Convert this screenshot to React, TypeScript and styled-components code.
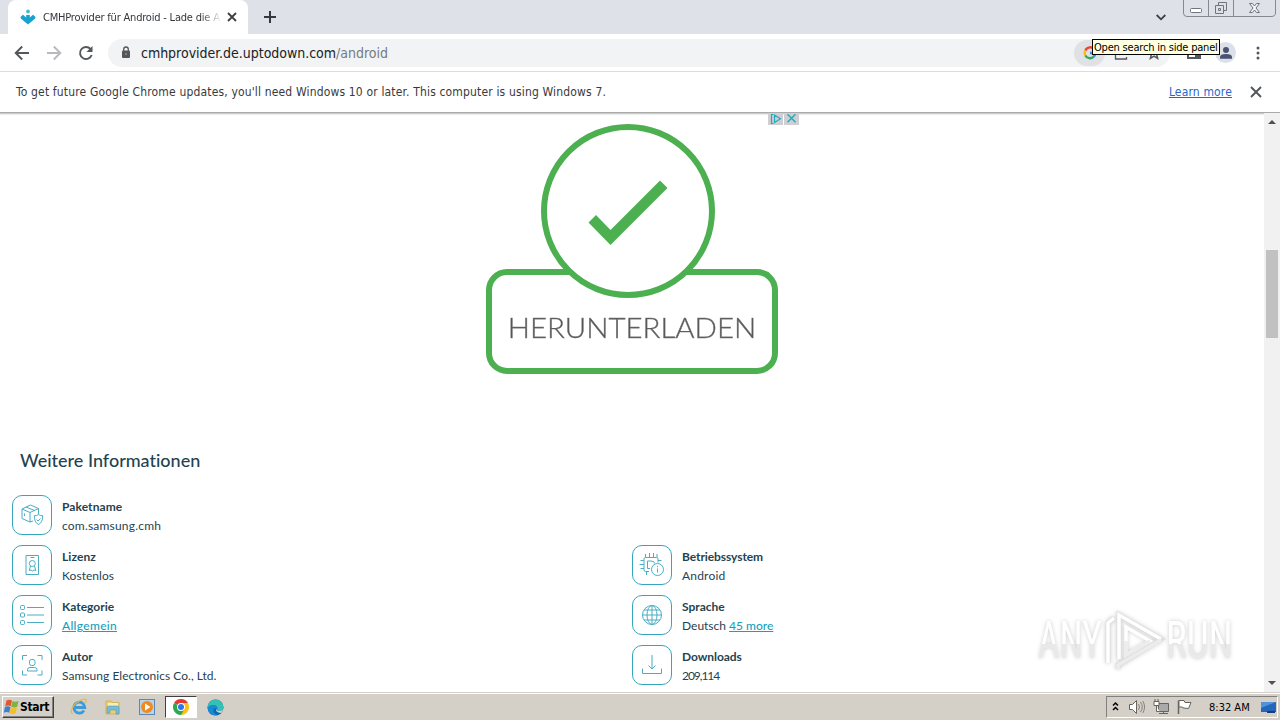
import React from "react"

import styled, { createGlobalStyle, css } from 'styled-components';

export default function App() {
  return (
    <Screen>
      <GlobalStyle />
      <TabStrip>
        <Tab>
          <UptodownLogo />
          <TabTitle>CMHProvider für Android - Lade die A</TabTitle>
          <Cross size={8} color="#3c4043" thickness={1.8} />
        </Tab>
        <NewTab><PlusIcon /></NewTab>
        <TabSearch><Chevron /></TabSearch>
        <WindowControls />
      </TabStrip>
      <Toolbar>
        <NavButtons>
          <ArrowLeft color="#54575b" />
          <ArrowLeft color="#b7b9bc" flipped />
          <ReloadIcon />
        </NavButtons>
        <AddressBar>
          <LockIcon />
          <Url>cmhprovider.de.uptodown.com<UrlPath>/android</UrlPath></Url>
          <SideSearch><GoogleIcon /></SideSearch>
          <ShareIcon />
          <StarIcon />
        </AddressBar>
        <SidePanelIcon />
        <Avatar><PersonIcon /></Avatar>
        <MenuDots />
        <Tooltip>Open search in side panel</Tooltip>
      </Toolbar>
      <InfoBar>
        <InfoText>To get future Google Chrome updates, you'll need Windows 10 or later. This computer is using Windows 7.</InfoText>
        <LearnMore>Learn more</LearnMore>
        <Cross size={10} color="#505357" thickness={1.8} />
      </InfoBar>
      <Viewport>
        <Page>
          <Ad>
            <AdBadges>
              <AdBadge>
                <svg width="15" height="12" viewBox="0 0 15 12" fill="none" stroke="#27a9bd" strokeWidth="1.2"><path d="M5.500 1.500h-2v9h2M6.500 2v7.500l6-3.750z" /></svg>
              </AdBadge>
              <AdBadge>
                <svg width="15" height="12" viewBox="0 0 15 12" fill="none" stroke="#27a9bd" strokeWidth="1.5"><path d="M3.500 1.200l8 8M11.500 1.200l-8 8" /></svg>
              </AdBadge>
            </AdBadges>
            <DownloadBox><DownloadLabel>HERUNTERLADEN</DownloadLabel></DownloadBox>
            <DownloadCircle>
              <svg width="82" height="67" viewBox="0 0 82 67"><path d="M3.500 43.500L25.500 66 82.500 9 75 1.500 25.500 51 11 36z" fill="#4caf50" /></svg>
            </DownloadCircle>
          </Ad>
          <Heading>Weitere Informationen</Heading>
          <Details>
            <Detail wide icon={<BoxIcon />} label="Paketname" spacing={0.08}><Value $spacing={0.2}>com.samsung.cmh</Value></Detail>
            <Detail icon={<LicenceIcon />} label="Lizenz" spacing={0.1}><Value $spacing={0.05}>Kostenlos</Value></Detail>
            <Detail icon={<ChipIcon />} label="Betriebssystem" spacing={-0.08}><Value $spacing={0.2}>Android</Value></Detail>
            <Detail icon={<ListIcon />} label="Kategorie" spacing={0}><ValueLink $spacing={0.3}>Allgemein</ValueLink></Detail>
            <Detail icon={<GlobeIcon />} label="Sprache" spacing={0}><Value>Deutsch <ValueLink>45 more</ValueLink></Value></Detail>
            <Detail icon={<AuthorIcon />} label="Autor" spacing={0}><Value $spacing={0.03}>Samsung Electronics Co., Ltd.</Value></Detail>
            <Detail icon={<DownloadIcon />} label="Downloads" spacing={-0.05}><Value $spacing={-1.05}>209,114</Value></Detail>
          </Details>
          <Watermark />
        </Page>
        <ScrollBar>
          <ScrollArrow />
          <ScrollThumb />
          <ScrollArrow $down />
        </ScrollBar>
      </Viewport>
      <Taskbar>
        <StartButton><WindowsLogo />Start</StartButton>
        <TaskItem><IeIcon /></TaskItem>
        <TaskItem><ExplorerIcon /></TaskItem>
        <TaskItem><PlayerIcon /></TaskItem>
        <TaskItem $active><ChromeIcon /></TaskItem>
        <TaskItem><EdgeIcon /></TaskItem>
        <Tray>
          <TrayIcons />
          <Clock>8:32 AM</Clock>
          <DesktopIcon />
        </Tray>
      </Taskbar>
    </Screen>
  );
};

type DetailProps = { icon: React.ReactNode, label: string, spacing: number, wide?: boolean, children: React.ReactNode };

function Detail({ icon, label, spacing, wide, children }: DetailProps) {
  return (
    <DetailRow $wide={wide}>
      <IconFrame>{icon}</IconFrame>
      <DetailText>
        <Label $spacing={spacing}>{label}</Label>
        <div>{children}</div>
      </DetailText>
    </DetailRow>
  );
}

function Cross({ size, color, thickness }: { size: number, color: string, thickness: number }) {
  return <svg width={size + 2} height={size + 2} viewBox={`-1 -1 ${size + 2} ${size + 2}`}><path d={`M0 0L${size} ${size}M${size} 0L0 ${size}`} stroke={color} strokeWidth={thickness} /></svg>;
}

function UptodownLogo() {
  return (
    <svg width="16" height="16" viewBox="0 0 16 16">
      <circle cx="8" cy="2.500" r="1.900" fill="#4cb8dc" />
      <path d="M.5 8L3 5.800 6.200 8.500V6h3.600v2.500L13 5.800 15.500 8q0 1.500-1.500 2.500L8 15.600 2 10.500Q.5 9.500.5 8z" fill="#16a3cf" />
    </svg>
  );
}

function PlusIcon() {
  return <svg width="12" height="12" viewBox="0 0 12 12"><path d="M6 0v12M0 6h12" stroke="#35383c" strokeWidth="2" /></svg>;
}

function Chevron() {
  return <svg width="10" height="7" viewBox="0 0 10 7"><path d="M.7 1l4.300 4.300L9.300 1" fill="none" stroke="#3c4043" strokeWidth="1.8" /></svg>;
}

function WindowControls() {
  return (
    <Controls width="94" height="17" viewBox="0 0 94 17" fill="none" stroke="#70747b">
      <path d="M.5 0v13q0 3.500 3.500 3.500h84q4.500 0 4.500-3.500V0M25.500 0v16M50.500 0v16" stroke="#858990" />
      <rect x="7.500" y="8.500" width="11" height="4" rx="1" fill="#fff" />
      <path d="M35.500 5.500v-3h8v8h-3M32.500 5.500h8v8h-8zM35.500 8.500h2v2h-2z" />
      <path d="M66.500 3.500h3l2 2.500 2-2.500h3L73 8l3.500 4.500h-3l-2-2.500-2 2.500h-3L70 8z" fill="#f4f5f7" />
    </Controls>
  );
}

function ArrowLeft({ color, flipped }: { color: string, flipped?: boolean }) {
  return <svg width="16" height="16" viewBox="0 0 16 16" transform={flipped ? 'scale(-1 1)' : undefined}><path d="M15 8H2M8.200 1.500L1.700 8l6.500 6.500" fill="none" stroke={color} strokeWidth="1.900" /></svg>;
}

function ReloadIcon() {
  return (
    <svg width="16" height="16" viewBox="0 0 16 16">
      <path d="M13.700 10A6 6 0 1 1 12.500 4" fill="none" stroke="#54575b" strokeWidth="1.900" />
      <path d="M14.500 1v6h-6z" fill="#54575b" />
    </svg>
  );
}

function LockIcon() {
  return (
    <svg width="10" height="13" viewBox="0 0 10 13">
      <rect x="1" y="4.500" width="8" height="7.500" rx="1" fill="#54575b" />
      <path d="M2.700 5V3.300a2.300 2.300 0 0 1 4.600 0V5" fill="none" stroke="#54575b" strokeWidth="1.300" />
      <circle cx="5" cy="8" r="1" fill="#8b8e91" />
    </svg>
  );
}

function GoogleIcon() {
  return (
    <svg width="14" height="14" viewBox="0 0 14 14" fill="none" strokeWidth="2.400">
      <path d="M11.300 3.300A5.200 5.200 0 0 0 2.400 4.500" stroke="#ea4335" />
      <path d="M2.400 4.500a5.200 5.200 0 0 0 0 5" stroke="#fbbc05" />
      <path d="M2.400 9.500a5.200 5.200 0 0 0 8.100 1.400" stroke="#34a853" />
      <path d="M10.500 10.900A5 5 0 0 0 12.200 7H7" stroke="#4285f4" />
    </svg>
  );
}

function ShareIcon() {
  return <svg width="14" height="14" viewBox="0 0 14 14"><path d="M1.500 6v7h11v-2M5 9q1-5 7-5" fill="none" stroke="#54575b" strokeWidth="1.300" /></svg>;
}

function StarIcon() {
  return <svg width="14" height="14" viewBox="0 0 14 14"><path d="M7 1.500l1.600 3.800 4.100.3-3.100 2.700 1 4L7 10.100l-3.600 2.200 1-4-3.100-2.700 4.100-.3z" fill="none" stroke="#54575b" strokeWidth="1.500" /></svg>;
}

function SidePanelIcon() {
  return <svg width="14" height="14" viewBox="0 0 14 14"><path d="M1 1h12v11H1z" fill="none" stroke="#54575b" strokeWidth="2" /><path d="M8 1h5v11H8z" fill="#54575b" /></svg>;
}

function PersonIcon() {
  return <svg width="14" height="14" viewBox="0 0 14 14" fill="#4b5271"><circle cx="7" cy="4" r="3" /><path d="M1 12.800V11q0-3 6-3t6 3v1.800z" /></svg>;
}

function MenuDots() {
  return <svg width="4" height="16" viewBox="0 0 4 16" fill="#54575b"><circle cx="2" cy="3" r="1.500" /><circle cx="2" cy="8" r="1.500" /><circle cx="2" cy="13" r="1.500" /></svg>;
}

function BoxIcon() {
  return (
    <LineIcon>
      <path d="M1 5L9.500 1l8 3.500V10M1 5v9.500L9 18l3-1M1 5l8 3.500V18M9 8.500l8.500-4M5 3l8.500 3.500M3.500 9.500v2.500" />
      <path d="M17.500 10.500q2 1.500 4.200 1.200 0 6.800-4.200 8.800-4.200-2-4.200-8.800 2.200.3 4.200-1.200zM15.500 15.500l1.500 1.500 2.500-2.500" />
    </LineIcon>
  );
}

function LicenceIcon() {
  return (
    <LineIcon>
      <path d="M5 1.500h12.500v19H5zM9.500 3.500h4" />
      <circle cx="11.300" cy="9.500" r="3" />
      <path d="M9.500 12l-1.300 4.500 1.800-.5 1.500 1 1.500-1 1.800.5L13.500 12" />
    </LineIcon>
  );
}

function ChipIcon() {
  return (
    <LineIcon>
      <path d="M8 17.500H4.500q-1.500 0-1.500-1.500V5q0-1.500 1.500-1.500h11Q17 3.500 17 5v3.500M4.500 3.500V0M8.500 3.500V-1M12.500 3.500V-1M16 3.500V0M3 6.500H-.5M3 10.500H-1.500M3 14.500H-.5M5.500 17.500V21M17 6.500h3.500M9 14.500H6.500V7H10q3.500 0 3.500 2.500" />
      <circle cx="16.500" cy="15.500" r="6" />
      <path d="M16.500 14.500v4M16.500 11.800v1.400" />
    </LineIcon>
  );
}

function ListIcon() {
  return (
    <LineIcon>
      <rect x="-.5" y="1.500" width="4" height="4" rx="1" />
      <rect x="-.5" y="9" width="4" height="4" rx="1" />
      <rect x="-.5" y="16.500" width="4" height="4" rx="1" />
      <path d="M6 3.500h17M6 11h17M6 18.500h17" />
    </LineIcon>
  );
}

function GlobeIcon() {
  return (
    <LineIcon>
      <circle cx="11" cy="11" r="9.500" />
      <ellipse cx="11" cy="11" rx="5" ry="9.500" />
      <path d="M11 1.500v19M1.500 11h19M3 6h16M3 16h16" />
    </LineIcon>
  );
}

function AuthorIcon() {
  return (
    <LineIcon>
      <path d="M1.500 6V1.500H6M16.500 1.500h4.500V6M1.500 16.500V21H6M16.500 21h4.500v-4.500" />
      <rect x="8.500" y="5.500" width="5.500" height="6" rx="2" />
      <path d="M6.500 17v-1.500q0-2 2.500-2h4.500q2.500 0 2.500 2V17z" />
    </LineIcon>
  );
}

function DownloadIcon() {
  return <LineIcon><path d="M11 1v14M7.500 11.500L11 15l3.500-3.500M1.500 14.500v5h19v-5" /></LineIcon>;
}

function LineIcon({ children }: { children: React.ReactNode }) {
  return <svg width="22" height="22" viewBox="0 0 22 22" overflow="visible" fill="none" stroke="#4badc3">{children}</svg>;
}

function Watermark() {
  return (
    <WatermarkRow>
      <WatermarkText $scale={0.72}>ANY</WatermarkText>
      <svg width="62" height="64" viewBox="0 0 62 64" fill="none" stroke="#fff" strokeWidth="3.500">
        <path d="M4 54V14l6-5M15 50V6l42 24L14 56v4" stroke="#dedede" strokeWidth="5" />
        <path d="M4 54V14l6-5M15 50V6l42 24M22 18v28l24-14z" />
        <path d="M22 32v14l24-14M57 31L14 56v4" stroke="#ececec" />
      </svg>
      <WatermarkText $scale={0.75}>RUN</WatermarkText>
    </WatermarkRow>
  );
}

function WindowsLogo() {
  return (
    <svg width="17" height="16" viewBox="0 0 16 16">
      <path d="M3 1.500q2.500-1.500 5.500 0L7.200 7.200q-2.500-1.500-5.500 0z" fill="#e4572e" />
      <path d="M9 2q2.500 1.500 6 0l-1.300 5.700q-3 1.500-6 0z" fill="#7cb342" />
      <path d="M1.500 8q2.500-1.500 5.500 0l-1.300 5.700q-2.500-1.500-5.500 0z" fill="#3f7fd0" />
      <path d="M7.500 8.500q2.500 1.500 6 0l-1.300 5.700q-3 1.500-6 0z" fill="#f5bd26" />
    </svg>
  );
}

function IeIcon() {
  return (
    <svg width="18" height="18" viewBox="0 0 18 18" fill="none">
      <path d="M14 12.500A5.500 5.500 0 1 1 14.800 9.500H4" stroke="#3c9bd8" strokeWidth="2.800" />
      <path d="M2.500 16C-1 13 4 5.500 10 2.500s7-1 5.500 2.500" stroke="#e8b93b" strokeWidth="1.300" />
    </svg>
  );
}

function ExplorerIcon() {
  return (
    <svg width="18" height="18" viewBox="0 0 18 18">
      <path d="M2 3h5l1 1.500h7V16H2z" fill="#edd06b" stroke="#c6a84b" strokeWidth=".7" />
      <path d="M4 5h10v4H4z" fill="#f7efb8" />
      <path d="M3 15V10q0-2 2-2h8q2 0 2 2v6h-3v-4H6v3z" fill="#77bddb" stroke="#5297b8" strokeWidth=".6" />
    </svg>
  );
}

function PlayerIcon() {
  return (
    <svg width="18" height="18" viewBox="0 0 18 18">
      <rect x="1.500" y="1.500" width="15" height="15" fill="#b7d4eb" stroke="#5a87b5" />
      <circle cx="9" cy="9" r="6" fill="#f18a1c" />
      <path d="M7 5.500v7L12.500 9z" fill="#fff" />
    </svg>
  );
}

function ChromeIcon() {
  return (
    <svg width="16" height="16" viewBox="0 0 16 16">
      <path d="M8 8L1.070 4A8 8 0 0 1 14.930 4z" fill="#e33b2e" />
      <path d="M8 8V4h6.930A8 8 0 0 1 8 16z" fill="#fbc116" />
      <path d="M8 8l3.500 2L8 16A8 8 0 0 1 1.070 4z" fill="#2da94f" />
      <circle cx="8" cy="8" r="4" fill="#fff" />
      <circle cx="8" cy="8" r="3" fill="#3174e8" />
    </svg>
  );
}

function EdgeIcon() {
  return (
    <svg width="17" height="17" viewBox="0 0 17 17">
      <circle cx="8.500" cy="8.500" r="8" fill="#0b67b8" />
      <path d="M.5 9A8 8 0 0 1 16.500 8q0 4-4 4-3.500 0-2-2.500Q9.500 5 5 6.500 1.500 7.500.5 9z" fill="#35bfb5" />
      <path d="M.5 9Q2 5.500 6.500 6q4 .5 4 3.500Q6 8.500 6.500 12 7 15 11 16 2 18 .5 9z" fill="#168bd2" />
      <path d="M10.300 9.500q-1.500 2.500 2 2.500 3 0 4-2-.5 2.500-2 4-5-.5-5.300-3z" fill="#d4d0c8" />
    </svg>
  );
}

function TrayIcons() {
  return (
    <svg width="84" height="18" viewBox="0 0 84 18" fill="none" stroke="#66645f">
      <path d="M2 7.500l2.500-2.500L7 7.500M2 12l2.500-2.500L7 12" stroke="#000" strokeWidth="1.500" />
      <path d="M18.500 6.500h3l4-4v13l-4-4h-3z" fill="#fff" />
      <path d="M27.500 6q2 3 0 6M29.500 4q3.500 5 0 10M31.800 3q3.500 6 0 12" stroke="#85837e" />
      <path d="M47.500 5.500h10v8h-10zM48 15.500h9M52.500 13v2" fill="#aaa" />
      <path d="M43 3.500h5v4h-5zM45.500 7.500v6h3M44 1v2M47 1v2" fill="#fff" />
      <path d="M67.500 16V2.500" strokeWidth="1.500" />
      <path d="M68 2.500h5l1 2h6l-2.500 6-5.500-.5-.5-1H68z" fill="#fff" />
    </svg>
  );
}

function DesktopIcon() {
  return <svg width="16" height="13" viewBox="0 0 16 13"><path d="M0 1h15v10H0z" fill="#2366bb" /><path d="M0 1h15L0 7z" fill="#4f94da" /><path d="M6 10h8v2H6z" fill="#173c77" /></svg>;
}

const GlobalStyle = createGlobalStyle`
  body {
    margin: 0;
    overflow: hidden;
  }
  * {
    box-sizing: border-box;
  }
  svg {
    display: block;
    flex: none;
  }
`

const uiFont = css`
  font-family: "DejaVu Sans Condensed", "DejaVu Sans", sans-serif;
  font-stretch: condensed;
`

const Screen = styled.div`
  ${uiFont}
  display: flex;
  flex-direction: column;
  width: 1280px;
  height: 720px;
  background: #fff;
  white-space: nowrap;
`

const TabStrip = styled.div`
  display: flex;
  align-items: flex-start;
  height: 34px;
  padding-left: 8px;
  background: #dee1e8;
`

const Tab = styled.div`
  display: flex;
  align-items: center;
  width: 240px;
  height: 34px;
  padding: 0 11px 0 12px;
  border-radius: 8px 8px 0 0;
  background: #fff;
`

const TabTitle = styled.div`
  flex: 1;
  margin: 1px 5px 0 7px;
  font-size: 11px;
  letter-spacing: -.2px;
  line-height: 16px;
  color: #34373b;
  mask-image: linear-gradient(90deg, #000 88%, transparent);
`

const NewTab = styled.div`
  margin: 11px 0 0 16px;
`

const TabSearch = styled.div`
  margin: 14px 0 0 auto;
`

const Controls = styled.svg`
  margin: 0 3px 0 17px;
`

const Toolbar = styled.div`
  position: relative;
  display: flex;
  align-items: center;
  height: 38px;
  padding: 0 20px 0 14px;
  border-bottom: 1px solid #dcdcdd;
`

const NavButtons = styled.div`
  display: flex;
  gap: 16px;
  width: 94px;
`

const AddressBar = styled.div`
  display: flex;
  align-items: center;
  width: 1062px;
  height: 28px;
  margin-right: 17px;
  padding: 0 9px 0 13px;
  border-radius: 14px;
  background: #f1f3f4;
`

const Url = styled.div`
  flex: 1;
  margin-left: 10px;
  font-size: 14px;
  letter-spacing: -.02px;
  color: #202124;
`

const UrlPath = styled.span`
  color: #777b80;
`

const SideSearch = styled.div`
  display: flex;
  align-items: center;
  width: 31px;
  height: 26px;
  margin-right: 9px;
  padding-left: 9px;
  border-radius: 13px;
  background: #dfe1e4;

  & + svg {
    margin-right: 19px;
  }
`

const Avatar = styled.div`
  display: flex;
  align-items: center;
  justify-content: center;
  width: 21px;
  height: 21px;
  margin: 0 20px 0 14px;
  border-radius: 50%;
  background: #dce0e8;
`

const Tooltip = styled.div`
  position: absolute;
  top: 5px;
  left: 1092px;
  width: 128px;
  height: 16px;
  padding-left: 1px;
  border: 1px solid #000;
  background: #ffffe1;
  font-size: 11px;
  letter-spacing: -.2px;
  line-height: 15px;
  color: #000;
`

const InfoBar = styled.div`
  display: flex;
  align-items: center;
  height: 40px;
  padding: 0 18px 0 16px;
  font-size: 12px;
  letter-spacing: .16px;
  color: #38393c;
`

const InfoText = styled.span`
  flex: 1;
`

const LearnMore = styled.span`
  margin-right: 18px;
  color: #2a66c8;
  text-decoration: underline;
`

const Viewport = styled.div`
  display: flex;
  height: 580px;
  border-top: 1px solid #aaa;
  box-shadow: inset 0 1px #ccc, inset 0 2px #ececec;
`

const Page = styled.div`
  position: relative;
  width: 1264px;
  overflow: hidden;
`

const Ad = styled.div`
  position: relative;
  height: 335px;
`

const AdBadges = styled.div`
  position: absolute;
  top: 0;
  left: 768px;
  display: flex;
  gap: 1px;
`

const AdBadge = styled.div`
  width: 15px;
  height: 12px;
  background: #cfcfd3;
`

const DownloadBox = styled.div`
  position: absolute;
  top: 156px;
  left: 486px;
  display: flex;
  justify-content: center;
  width: 292px;
  height: 105px;
  border: 6px solid #4caf50;
  border-radius: 21px;
`

const DownloadLabel = styled.span`
  margin-top: 36px;
  font-family: Lato, sans-serif;
  font-size: 27px;
  font-weight: 300;
  line-height: 34px;
  color: #555;
  -webkit-text-stroke: .4px #777;
  transform: scaleX(1.09);
`

const DownloadCircle = styled.div`
  position: absolute;
  top: 11px;
  left: 541px;
  width: 174px;
  height: 174px;
  padding: 49px 0 0 38px;
  border: 6px solid #4caf50;
  border-radius: 50%;
  background: #fff;
`

const Heading = styled.h2`
  margin: 0 0 23px 20px;
  font-family: Lato, sans-serif;
  font-size: 18px;
  font-variant-ligatures: none;
  font-weight: 500;
  line-height: 24px;
  color: #1f4350;
`

const Details = styled.div`
  display: grid;
  grid-template-columns: 620px 620px;
  row-gap: 10px;
  padding-left: 12px;
  font-family: Lato, sans-serif;
  font-size: 12px;
  color: #1f4350;
`

const DetailRow = styled.div<{ $wide?: boolean }>`
  display: flex;
  grid-column: ${p => p.$wide ? 'span 2' : 'auto'};
  gap: 10px;
  height: 40px;
`

const IconFrame = styled.div`
  display: flex;
  align-items: center;
  justify-content: center;
  width: 40px;
  height: 40px;
  border: 1px solid #36a6bf;
  border-radius: 10px;
`

const DetailText = styled.div`
  padding-top: 2px;
  line-height: 19px;
`

const Label = styled.div<{ $spacing: number }>`
  font-weight: 700;
  letter-spacing: ${p => p.$spacing}px;
`

const Value = styled.span<{ $spacing?: number }>`
  letter-spacing: ${p => p.$spacing ?? 0}px;
`

const ValueLink = styled(Value)`
  color: #1a9fbd;
  font-weight: 500;
  text-decoration: underline;
`

const WatermarkRow = styled.div`
  position: absolute;
  top: 495px;
  left: 1038px;
  display: flex;
  align-items: center;
  filter: drop-shadow(0 0 2px #ccc);
`

const WatermarkText = styled.span<{ $scale: number }>`
  width: 100px;
  margin-right: -34px;
  font-family: "Roboto", sans-serif;
  font-size: 52px;
  line-height: 66px;
  color: transparent;
  background: linear-gradient(#fff 54%, #e9e9e9 54%);
  background-clip: text;
  transform: scaleX(${p => p.$scale});
  transform-origin: 0 50%;
`

const ScrollBar = styled.div`
  display: flex;
  flex-direction: column;
  align-items: center;
  justify-content: space-between;
  width: 16px;
  padding: 7px 0;
  background: #f1f1f1;
`

const ScrollArrow = styled.div<{ $down?: boolean }>`
  border: 4px solid transparent;
  border-${p => p.$down ? 'top' : 'bottom'}-color: #505050;
  border-${p => p.$down ? 'bottom' : 'top'}-width: 0;
`

const ScrollThumb = styled.div`
  width: 12px;
  height: 88px;
  margin-bottom: 218px;
  background: #c1c1c1;
`

const Taskbar = styled.div`
  display: flex;
  align-items: flex-start;
  height: 28px;
  padding: 2px 2px 0;
  border-top: 1px solid #d4d0c8;
  box-shadow: inset 0 1px #fff;
  background: #d4d0c8;
`

const StartButton = styled.div`
  display: flex;
  align-items: center;
  width: 52px;
  height: 22px;
  margin: 1px 8px 0 0;
  border: 1px solid;
  border-color: #fff #404040 #404040 #fff;
  box-shadow: inset -1px -1px #808080;
  font-size: 12px;
  font-weight: 700;
  letter-spacing: -.3px;
  color: #000;
`

const TaskItem = styled.div<{ $active?: boolean }>`
  display: flex;
  align-items: center;
  justify-content: center;
  width: 32px;
  height: 22px;
  margin: 1px 1px 0;
  border: 1px solid transparent;
  ${p => p.$active && css`
    border-color: #404040 #fff #fff #404040;
    background: #fff;
  `}
`

const Tray = styled.div`
  display: flex;
  align-items: center;
  width: 172px;
  height: 22px;
  margin: 1px 0 0 auto;
  padding-left: 4px;
  border: 1px solid;
  border-color: #808080 #fff #fff #808080;
`

const Clock = styled.span`
  flex: 1;
  margin-left: 14px;
  font-size: 11px;
  color: #000;
`
